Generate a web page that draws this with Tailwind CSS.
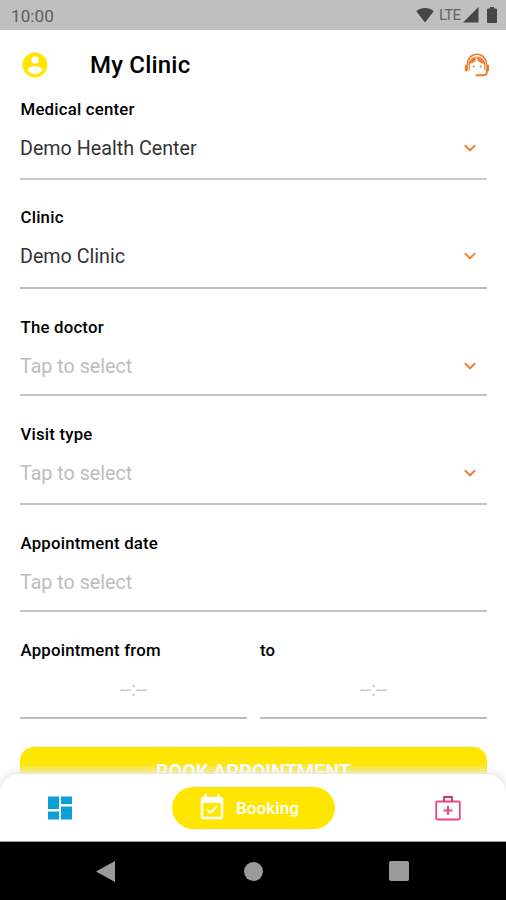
<!DOCTYPE html>
<html lang="en">
<head>
    <meta charset="UTF-8">
    <meta name="viewport" content="width=device-width, initial-scale=1.0">
    <title>My Clinic</title>
    <script src="https://cdn.jsdelivr.net/npm/@tailwindcss/browser@4"></script>
</head>
<body class="bg-white font-['Roboto',sans-serif] text-black">
    <div class="relative w-[506px] h-[900px] overflow-hidden flex flex-col">
        <!-- Status bar -->
        <div class="h-[30px] shrink-0 bg-[#bfbfbf] flex items-center justify-between pl-[11px] pr-[9px] text-[#5c5c5c]">
            <span class="text-[17px] leading-5 tracking-[0.1px] pt-px">10:00</span>
            <div class="flex items-center text-[#464646]">
                <svg class="w-[18px] h-4" viewBox="0 0 18 16" fill="currentColor"><path d="M9 15.5 0.3 4.2C5 -0.1 13 -0.1 17.7 4.2Z"/></svg>
                <span class="text-[15px] leading-4 ml-[5px] w-[22px] tracking-[-0.7px] text-[#666]">LTE</span>
                <svg class="w-4 h-4 ml-0.5" viewBox="0 0 16 16" fill="currentColor"><path d="M0 15.5 15.5 0V15.5Z"/></svg>
                <svg class="w-[10px] h-4 ml-2" viewBox="0 0 10 16" fill="currentColor"><path d="M3 0h4v1.5h2q1 0 1 1V15q0 1-1 1H1q-1 0-1-1V2.500q0-1 1-1h2z"/></svg>
            </div>
        </div>

        <!-- Header -->
        <header class="h-[69px] shrink-0 flex items-center pl-5 pr-4">
            <svg class="w-[30px] h-[30px]" viewBox="0 0 24 24" fill="#ffe600"><path d="M12 2C6.480 2 2 6.480 2 12s4.480 10 10 10 10-4.480 10-10S17.520 2 12 2zm0 3c1.660 0 3 1.340 3 3s-1.340 3-3 3-3-1.340-3-3 1.340-3 3-3zm0 14.200c-2.500 0-4.710-1.280-6-3.220.03-1.990 4-3.080 6-3.080 1.990 0 5.970 1.090 6 3.080-1.290 1.940-3.500 3.220-6 3.220z"/></svg>
            <h1 class="ml-10 text-2xl leading-8 font-medium tracking-[0.2px]">My Clinic</h1>
            <svg class="ml-auto w-[26px] h-6" viewBox="0 0 26 24" fill="none" stroke="#ee7d2b" stroke-width="1.600" stroke-linecap="round">
                <path d="M3.500 11.500C3.500 5.500 7.500 1.300 13 1.300S22.500 5.500 22.500 11.500"/>
                <path d="M5.200 12C5.200 7.500 8.500 4 13 4s7.800 3.500 7.800 8V17" stroke-width="1.100"/>
                <path d="M5.200 12v5" stroke-width="1.100"/>
                <path d="M2.400 13v4M23.600 13v4" stroke-width="3"/>
                <path d="M6.500 9.800C9.500 9.300 11 7.800 11.500 5.800C9.500 5.500 7.500 7 6.500 9.800zM13.500 5.500C14.500 8 16.500 9.500 19.500 10C18.500 7.200 16.500 5.800 13.500 5.500z" fill="#ee7d2b" stroke-width="1.300"/>
                <path d="M23 18c0 2.800-1 4.200-3 4.200h-7.500" stroke-width="2"/>
                <path d="M9.600 13.500v.2M16.600 13.500v.2" stroke-width="1.800"/>
            </svg>
        </header>

        <!-- Appointment form -->
        <main class="pl-5 pr-[19px] shrink-0 text-[16.800px] leading-5">
            <div class="h-[81px] mb-[27px] border-b-2 border-[#c9c9c9]">
                <div class="font-medium tracking-[0.2px] pl-[0.5px]">Medical center</div>
                <div class="flex items-center justify-between mt-4 h-[26px] pr-[11px]">
                    <span class="pt-0.5 text-[19.700px] leading-7 text-[#333]">Demo Health Center</span>
                    <svg class="w-3 h-2" viewBox="0 0 12 8" fill="none" stroke="#ee8136" stroke-width="1.900"><path d="M.8 1.200 6 6.300 11.200 1.200"/></svg>
                </div>
            </div>
            <div class="h-[82px] mb-7 border-b-2 border-[#bdbdbd]">
                <div class="font-medium tracking-[0.2px] pl-[0.5px]">Clinic</div>
                <div class="flex items-center justify-between mt-4 h-[26px] pr-[11px]">
                    <span class="pt-0.5 text-[19.700px] leading-7 text-[#333]">Demo Clinic</span>
                    <svg class="w-3 h-2" viewBox="0 0 12 8" fill="none" stroke="#ee8136" stroke-width="1.900"><path d="M.8 1.200 6 6.300 11.200 1.200"/></svg>
                </div>
            </div>
            <div class="h-[79px] mb-7 border-b-2 border-[#c4c4c4]">
                <div class="font-medium tracking-[0.2px] pl-[0.5px]">The doctor</div>
                <div class="flex items-center justify-between mt-4 h-[26px] pr-[11px]">
                    <span class="pt-0.5 text-[19.700px] leading-7 text-[#bdbdbd]">Tap to select</span>
                    <svg class="w-3 h-2" viewBox="0 0 12 8" fill="none" stroke="#ee8136" stroke-width="1.900"><path d="M.8 1.200 6 6.300 11.200 1.200"/></svg>
                </div>
            </div>
            <div class="h-[81px] mb-7 border-b-2 border-[#c4c4c4]">
                <div class="font-medium tracking-[0.2px] pl-[0.5px]">Visit type</div>
                <div class="flex items-center justify-between mt-4 h-[26px] pr-[11px]">
                    <span class="pt-0.5 text-[19.700px] leading-7 text-[#bdbdbd]">Tap to select</span>
                    <svg class="w-3 h-2" viewBox="0 0 12 8" fill="none" stroke="#ee8136" stroke-width="1.900"><path d="M.8 1.200 6 6.300 11.200 1.200"/></svg>
                </div>
            </div>
            <div class="h-[79px] mb-7 border-b-2 border-[#c4c4c4]">
                <div class="font-medium tracking-[0.2px] pl-[0.5px]">Appointment date</div>
                <div class="flex items-center mt-4 h-[26px]">
                    <span class="pt-0.5 text-[19.700px] leading-7 text-[#bdbdbd]">Tap to select</span>
                </div>
            </div>
            <div class="grid grid-cols-2 gap-[13px]">
                <div class="h-[79px] border-b-2 border-[#bdbdbd]">
                    <div class="font-medium tracking-[0.2px] pl-[0.5px]">Appointment from</div>
                    <div class="mt-[17px] text-center text-xl leading-6 text-[#c9c9c9]">--:--</div>
                </div>
                <div class="h-[79px] border-b-2 border-[#bdbdbd]">
                    <div class="font-medium tracking-[0.2px]">to</div>
                    <div class="mt-[17px] text-center text-xl leading-6 text-[#c9c9c9]">--:--</div>
                </div>
            </div>
            <button class="mt-7 w-full h-[50px] pt-0.5 rounded-[14px] bg-[#ffe600] text-white text-[19.700px] leading-6 font-bold">BOOK APPOINTMENT</button>
        </main>

        <!-- Bottom tabs and system navigation -->
        <div class="absolute inset-x-0 bottom-0">
            <nav class="h-[67px] bg-white rounded-t-[20px] shadow-[0_0_9px_4px_#ebebeb] flex items-center justify-between pl-12 pr-[45px]">
                <svg class="w-6 h-6" viewBox="0 0 24 24" fill="#0b9fd8"><path d="M0 .5h11v12.500H0zM13 .5h11v7.500H13zM0 15.500h11V23.500H0zM13 10.500h11v13H13z"/></svg>
                <div class="w-[163px] h-[42px] rounded-full bg-[#ffe600] text-white flex items-center pl-[25px]">
                    <svg class="w-[30px] h-[30px]" viewBox="0 0 24 24" fill="currentColor"><path d="M16.530 11.060 15.470 10l-4.880 4.880-2.120-2.120-1.060 1.060L10.590 17l5.940-5.940zM19 3h-1V1h-2v2H8V1H6v2H5c-1.110 0-1.990.9-1.990 2L3 19c0 1.100.890 2 2 2h14c1.100 0 2-.9 2-2V5c0-1.100-.9-2-2-2zm0 16H5V8h14v11z"/></svg>
                    <span class="ml-[9px] text-[17px] leading-5 font-medium tracking-[0.1px]">Booking</span>
                </div>
                <svg class="w-[26px] h-[26px]" viewBox="0 0 26 26" fill="none" stroke="#e9448f" stroke-width="1.800">
                    <rect x="1.200" y="6.500" width="23.600" height="18" rx="1.200"/>
                    <path d="M9 6.500V2h8v4.500" stroke="#d72a7c"/>
                    <path d="M13 11v9M8.500 15.500h9" stroke-width="2"/>
                </svg>
            </nav>
            <div class="relative h-[59px] bg-black border-t border-[#999] flex items-center text-[#9a9a9a]">
                <svg class="ml-[96px] w-[19px] h-[21px]" viewBox="0 0 19 21" fill="currentColor"><path d="M19 0v21L0 10.500z"/></svg>
                <div class="ml-[129px] size-[19px] rounded-full bg-[#9a9a9a]"></div>
                <div class="ml-[126px] size-5 rounded-[2px] bg-[#9a9a9a]"></div>
            </div>
        </div>
    </div>
</body>
</html>
